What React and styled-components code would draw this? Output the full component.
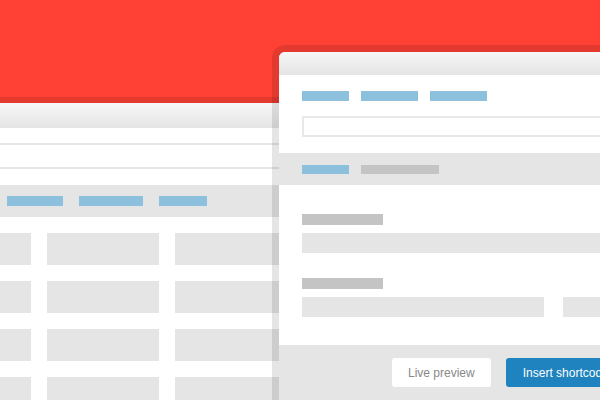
import React from 'react';
import styled, { createGlobalStyle } from 'styled-components';

const Global = createGlobalStyle`
  html, body { margin: 0; padding: 0; }
  body { font-family: "Liberation Sans", Arial, sans-serif; }
  *, *::before, *::after { box-sizing: border-box; }
`;

const Canvas = styled.div`
  position: relative;
  width: 600px;
  height: 400px;
  overflow: hidden;
  background: #fe4035;
`;

const Window = styled.div`
  position: absolute;
  left: ${(p) => p.$left}px;
  top: ${(p) => p.$top}px;
  width: ${(p) => p.$width}px;
  height: ${(p) => p.$height}px;
  background: #fff;
  border-radius: ${(p) => p.$radius || 0}px ${(p) => p.$radius || 0}px 0 0;
  box-shadow: 0 0 0 ${(p) => p.$shadow}px rgba(0, 0, 0, 0.1);
  display: flex;
  flex-direction: column;
`;

const TitleBar = styled.div`
  height: ${(p) => p.$h}px;
  flex-shrink: 0;
  border-radius: inherit;
  background: linear-gradient(#f7f7f7, #e4e4e4);
`;

const Row = styled.div`
  height: ${(p) => p.$h}px;
  flex-shrink: 0;
  border-bottom: ${(p) => (p.$line ? '2px solid #e6e6e6' : 'none')};
`;

const Band = styled.div`
  height: 32px;
  flex-shrink: 0;
  background: #e5e5e5;
  display: flex;
  align-items: center;
  gap: ${(p) => p.$gap}px;
  padding-left: ${(p) => p.$pad}px;
  margin-top: ${(p) => p.$mt || 0}px;
`;

const Bar = styled.div`
  width: ${(p) => p.$w}px;
  height: ${(p) => p.$h || 10}px;
  background: ${(p) => (p.$grey ? '#c4c4c4' : '#8cc0dd')};
  flex-shrink: 0;
`;

const Tabs = styled.div`
  display: flex;
  gap: 12px;
  margin-top: 16px;
`;

const Body = styled.div`
  padding: 0 23px;
`;

const Input = styled.div`
  margin-top: 15px;
  height: 21px;
  border: 2px solid #e8e8e8;
`;

const Table = styled.div`
  display: grid;
  grid-template-columns: 48px 112px 112px;
  grid-auto-rows: 32px;
  gap: 16px;
  padding: 16px 0 0 23px;
`;

const Cell = styled.div`
  background: #e5e5e5;
`;

const Form = styled.div`
  padding: 29px 0 0 23px;
  height: 160px;
  display: flex;
  flex-direction: column;
`;

const Label = styled.div`
  width: 81px;
  height: 11px;
  background: #c4c4c4;
  margin-top: ${(p) => p.$mt || 0}px;
`;

const FieldRow = styled.div`
  display: flex;
  gap: 19px;
  margin-top: 8px;
`;

const Field = styled.div`
  height: 20px;
  background: #e5e5e5;
  width: ${(p) => (p.$w ? `${p.$w}px` : 'auto')};
  flex: ${(p) => (p.$w ? '0 0 auto' : '1')};
`;

const Footer = styled.div`
  flex: 1;
  background: #e5e5e5;
  display: flex;
  align-items: flex-start;
  gap: 15px;
  padding: 13px 0 0 113px;
`;

const Button = styled.div`
  height: 29px;
  padding: 0 16px;
  border-radius: 3px;
  display: flex;
  align-items: center;
  white-space: nowrap;
  font-size: 12px;
  background: ${(p) => (p.$primary ? '#1e83be' : '#fff')};
  color: ${(p) => (p.$primary ? '#fff' : '#888')};
  padding-left: ${(p) => (p.$primary ? 17 : 16)}px;
`;

export default function App() {
  const rows = [0, 1, 2, 3];
  return (
    <Canvas>
      <Global />
      <Window $left={-40} $top={103} $width={340} $height={320} $shadow={6}>
        <TitleBar $h={25} />
        <Row $h={17} $line />
        <Row $h={24} $line />
        <Row $h={16} />
        <Band $gap={16} $pad={47}>
          <Bar $w={56} />
          <Bar $w={64} />
          <Bar $w={48} />
        </Band>
        <Table>
          {rows.map((r) => (
            <React.Fragment key={r}>
              <Cell />
              <Cell />
              <Cell />
            </React.Fragment>
          ))}
        </Table>
      </Window>

      <Window $left={279} $top={52} $width={360} $height={370} $shadow={7} $radius={6}>
        <TitleBar $h={23} />
        <Body>
          <Tabs>
            <Bar $w={47} />
            <Bar $w={57} />
            <Bar $w={57} />
          </Tabs>
          <Input />
        </Body>
        <Band $gap={12} $pad={23} $mt={16}>
          <Bar $w={47} $h={9} />
          <Bar $w={78} $h={9} $grey />
        </Band>
        <Form>
          <Label />
          <FieldRow>
            <Field />
          </FieldRow>
          <Label $mt={25} />
          <FieldRow>
            <Field $w={242} />
            <Field />
          </FieldRow>
        </Form>
        <Footer>
          <Button>Live preview</Button>
          <Button $primary>Insert shortcode</Button>
        </Footer>
      </Window>
    </Canvas>
  );
}
